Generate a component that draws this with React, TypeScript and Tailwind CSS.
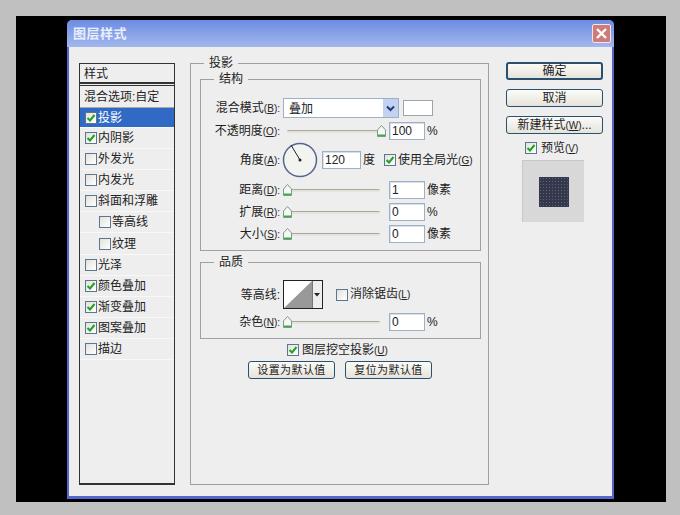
import type { ReactNode } from 'react';

const listItems = [
  { label: '投影', checked: true, active: true, rowClass: 'h-[20px]' },
  { label: '内阴影', checked: true },
  { label: '外发光' },
  { label: '内发光' },
  { label: '斜面和浮雕' },
  { label: '等高线', nested: true },
  { label: '纹理', nested: true, rowClass: 'h-[22px]' },
  { label: '光泽' },
  { label: '颜色叠加', checked: true },
  { label: '渐变叠加', checked: true },
  { label: '图案叠加', checked: true },
  { label: '描边' },
];

function Check({ checked = false }: { checked?: boolean }) {
  return (
    <span className="flex h-[12px] w-[12px] shrink-0 items-center justify-center border border-[#5d7590] bg-gradient-to-br from-[#e2e2dc] to-[#ffffff]">
      {checked && (
        <svg width="10" height="10" viewBox="0 0 10 10">
          <path d="M1.5 5 L4 7.5 L8.5 2" fill="none" stroke="#21a121" strokeWidth="2" />
        </svg>
      )}
    </span>
  );
}

// shortcut hint, narrower than the CJK text next to it
function Key({ k, colon = false }: { k: string; colon?: boolean }) {
  return (
    <span className="text-[10px]">
      (<span className="underline">{k}</span>){colon ? ':' : ''}
    </span>
  );
}

function Thumb({ left }: { left: number }) {
  return (
    <svg width="9" height="12" viewBox="0 0 9 12" className="absolute top-[-6px]" style={{ left }}>
      <path d="M0.5 5 L4.5 0.5 L8.5 5 V11.5 H0.5 Z" fill="#f7f7f4" stroke="#7d9a86" />
      <path d="M1 9.5 H8 V11 H1 Z" fill="#2fb04a" />
    </svg>
  );
}

function Slider({ value = 0 }: { value?: number }) {
  return (
    <div className="relative ml-[7px] mr-[9px] h-[3px] w-[93px] rounded-full border-t border-[#a8a89e] bg-[#e4e4dc]">
      <Thumb left={value ? 90 : -4} />
    </div>
  );
}

function Field({ value, width = 'w-[36px]' }: { value: string; width?: string }) {
  return (
    <div className={`flex h-[18px] ${width} items-center border border-[#9db0c8] bg-white pl-[2px] text-[12px] leading-none shadow-[inset_1px_1px_0_#d8dfe8]`}>
      {value}
    </div>
  );
}

function Row({ label, unit, value, sliderValue, className = '' }: { label: ReactNode; unit: string; value: string; sliderValue?: number; className?: string }) {
  return (
    <div className={`flex h-[18px] items-center ${className}`}>
      <div className="w-[79px] shrink-0 whitespace-nowrap pt-[1px] text-right">{label}</div>
      <Slider value={sliderValue} />
      <Field value={value} />
      <span className="ml-[2px]">{unit}</span>
    </div>
  );
}

function Btn({ children, className = '' }: { children: ReactNode; className?: string }) {
  return (
    <div className={`flex h-[18px] items-center justify-center whitespace-nowrap rounded-[3px] border border-[#29506f] bg-gradient-to-b from-[#fbfbf8] to-[#e6e3da] leading-none ${className}`}>
      <span>{children}</span>
    </div>
  );
}

function Group({ title, children, className = '', legendClass = 'ml-[13px]' }: { title: string; children: ReactNode; className?: string; legendClass?: string }) {
  return (
    <fieldset className={`border border-[#a0a0a0] ${className}`}>
      <legend className={`${legendClass} px-[5px] leading-[14px]`}>{title}</legend>
      {children}
    </fieldset>
  );
}

export default function App() {
  return (
    <div className="h-[515px] w-[680px] overflow-hidden bg-[#c0c0c0] pl-[16px] pt-[16px] text-[12px] leading-[14px] text-[#222222] [font-family:'Liberation_Sans','Noto_Sans_CJK_SC',sans-serif]">
      <div className="h-[486px] w-[650px] bg-black pl-[51px] pt-[4px]">
        <div className="flex h-[479px] w-[547px] flex-col rounded-t-[5px] bg-[#5566cc]">
          <div className="flex h-[27px] shrink-0 items-center justify-between rounded-t-[5px] bg-gradient-to-b from-[#6d8ce2] to-[#a3b7ec] pl-[6px] pr-[3px]">
            <span className="pt-[1px] text-[13px] font-bold tracking-[0.5px] text-[#e8eefc]">图层样式</span>
            <div className="flex h-[19px] w-[19px] items-center justify-center rounded-[2px] border border-[#f0e8e8] bg-[#cf7b78]">
              <svg width="13" height="13" viewBox="0 0 13 13">
                <path d="M2 2 L11 11 M11 2 L2 11" stroke="#ffffff" strokeWidth="2.4" />
              </svg>
            </div>
          </div>
          <div className="mx-[2px] mb-[3px] flex min-h-0 flex-1 bg-[#eeeeee] pl-[10px] pt-[16px]">
            <div className="h-[422px] w-[96px] shrink-0 border border-b-2 border-[#333333]">
              <div className="flex h-[20px] items-center border-b-2 border-[#333333] pl-[4px] pt-[1px]">样式</div>
              <div className="mt-[1px] flex h-[23px] items-center border-y border-t-[#333333] border-b-[#aaaaaa] pl-[4px] pt-[1px]">混合选项:自定</div>
              {listItems.map((item) => (
                <div
                  key={item.label}
                  className={`flex ${item.rowClass ?? 'h-[21px]'} items-center gap-[1px] border-b border-[#f8f8f8] ${item.nested ? 'pl-[19px]' : 'pl-[5px]'} ${item.active ? 'bg-[#316ac5] text-white' : ''}`}
                >
                  <Check checked={item.checked} />
                  {item.label}
                </div>
              ))}
            </div>

            <Group title="投影" legendClass="ml-[4px]" className="ml-[15px] -mt-[7px] h-[429px] w-[299px] shrink-0 pl-[9px]">
              <Group title="结构" className="mt-[2px] h-[179px] w-[281px]">
                <div className="mt-[12px] flex h-[20px] items-center">
                  <div className="w-[79px] shrink-0 whitespace-nowrap pt-[1px] text-right">混合模式<Key k="B" colon /></div>
                  <div className="ml-[3px] flex h-[20px] w-[116px] items-center justify-between border border-[#9db0c8] bg-white pl-[5px]">
                    <span className="pt-[1px]">叠加</span>
                    <span className="flex h-[18px] w-[15px] items-center justify-center bg-[#c3d2f0]">
                      <svg width="9" height="7" viewBox="0 0 9 7">
                        <path d="M1 1.5 L4.5 5 L8 1.5" fill="none" stroke="#243a78" strokeWidth="2" />
                      </svg>
                    </span>
                  </div>
                  <div className="ml-[4px] h-[16px] w-[30px] border border-[#9aa4ae] bg-white" />
                </div>
                <Row label={<>不透明度<Key k="O" colon /></>} unit="%" value="100" sliderValue={100} className="mt-[4px]" />
                <div className="mt-[2px] flex h-[36px] items-center">
                  <div className="w-[79px] shrink-0 whitespace-nowrap text-right">角度<Key k="A" colon /></div>
                  <svg width="36" height="36" viewBox="0 0 36 36" className="ml-[2px]">
                    <circle cx="18" cy="18" r="16.5" fill="#f3f3f0" stroke="#55658c" strokeWidth="1.5" />
                    <path d="M18 18 L9 3" stroke="#222222" strokeWidth="1" />
                    <circle cx="18" cy="18" r="1.5" fill="#222222" />
                  </svg>
                  <Field value="120" width="ml-[4px] w-[39px]" />
                  <span className="ml-[2px]">度</span>
                  <div className="ml-[9px] flex items-center gap-[2px] whitespace-nowrap">
                    <Check checked />
                    <span>使用全局光<Key k="G" /></span>
                  </div>
                </div>
                <Row label={<>距离<Key k="D" colon /></>} unit="像素" value="1" className="mt-[3px]" />
                <Row label={<>扩展<Key k="R" colon /></>} unit="%" value="0" className="mt-[4px]" />
                <Row label={<>大小<Key k="S" colon /></>} unit="像素" value="0" className="mt-[4px]" />
              </Group>

              <Group title="品质" className="mt-[4px] h-[84px] w-[281px]">
                <div className="mt-[11px] flex h-[29px] items-center">
                  <div className="w-[79px] shrink-0 text-right">等高线:</div>
                  <div className="ml-[3px] flex h-[29px] w-[40px] border border-[#222222] bg-white">
                    <svg width="28" height="27" viewBox="0 0 28 27">
                      <path d="M0 27 L28 0 V27 Z" fill="#999999" />
                    </svg>
                    <span className="flex flex-1 items-center justify-center border-l border-[#777777] bg-[#eeeeee]">
                      <svg width="7" height="4" viewBox="0 0 7 4">
                        <path d="M0 0 H6 L3 3.5 Z" fill="#222222" />
                      </svg>
                    </span>
                  </div>
                  <div className="ml-[13px] flex items-center gap-[2px] whitespace-nowrap">
                    <Check />
                    <span>消除锯齿<Key k="L" /></span>
                  </div>
                </div>
                <Row label={<>杂色<Key k="N" colon /></>} unit="%" value="0" className="mt-[4px]" />
              </Group>

              <div className="mt-[3px] flex h-[16px] items-center pl-[87px]">
                <span className="flex items-center gap-[3px] whitespace-nowrap">
                  <Check checked />
                  <span>图层挖空投影<Key k="U" /></span>
                </span>
              </div>
              <div className="mt-[3px] flex gap-[10px] pl-[48px] text-[11px] tracking-[0.4px]">
                <Btn className="w-[87px]">设置为默认值</Btn>
                <Btn className="w-[87px]">复位为默认值</Btn>
              </div>
            </Group>

            <div className="ml-[17px] flex w-[97px] shrink-0 flex-col -mt-[1px]">
              <Btn className="border-2">确定</Btn>
              <Btn className="mt-[9px]">取消</Btn>
              <Btn className="mt-[9px]">
                新建样式<Key k="W" />...
              </Btn>
              <div className="mt-[7px] flex h-[14px] items-center gap-[4px] pl-[19px]">
                <Check checked />
                <span>预览<Key k="V" /></span>
              </div>
              <div className="ml-[16px] mt-[5px] flex h-[62px] w-[62px] items-center justify-center border-l border-t border-[#c8c8c8] bg-[#d8d8d8]">
                <div className="h-[30px] w-[30px] bg-[#33384a] bg-[radial-gradient(circle,#596278_28%,transparent_34%)] bg-[length:3px_3px]" />
              </div>
            </div>
          </div>
        </div>
      </div>
    </div>
  );
}
